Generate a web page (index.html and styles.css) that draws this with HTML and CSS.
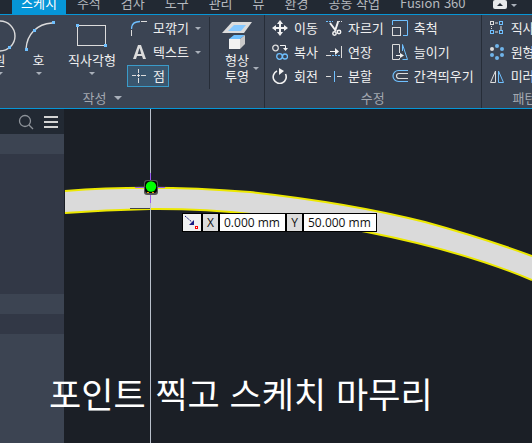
FILE: index.html
```html
<!DOCTYPE html>
<html lang="ko">
<head>
  <meta charset="utf-8">
  <title>스케치</title>
  <link rel="stylesheet" href="styles.css">
</head>
<body>
  <nav class="tabs">
    <a href="#" class="tab active">스케치</a>
    <a href="#" class="tab">주석</a>
    <a href="#" class="tab">검사</a>
    <a href="#" class="tab">도구</a>
    <a href="#" class="tab">관리</a>
    <a href="#" class="tab">뷰</a>
    <a href="#" class="tab">환경</a>
    <a href="#" class="tab">공동 작업</a>
    <a href="#" class="tab">Fusion 360</a>
    <button class="collapse" aria-label="리본 최소화">
      <svg width="24" height="14" viewBox="0 0 24 14">
        <rect x="0" y="0" width="14" height="9" rx="2" fill="#e6e8ea"/>
        <path d="M4 6h6L7 3z" fill="#222933"/>
        <path d="M18 4h6l-3 3z" fill="#a9b0ba"/>
      </svg>
    </button>
  </nav>

  <div class="ribbon">
    <section class="panel create">
      <div class="panel-body">
        <button class="large">
          <svg width="32" height="32" viewBox="0 0 32 32">
            <circle cx="16" cy="16" r="15" fill="none" stroke="#dcdcdc" stroke-width="1.4"/>
            <rect x="24" y="26" width="3" height="3" fill="#6fc0ff"/>
          </svg>
          <span>원</span>
          <i class="caret"></i>
        </button>
        <button class="large">
          <svg width="32" height="32" viewBox="0 0 32 32">
            <path d="M3 29C4 14 14 4 29 3" fill="none" stroke="#dcdcdc" stroke-width="1.4"/>
            <rect x="2" y="28" width="3" height="3" fill="#6fc0ff"/>
            <rect x="10" y="9" width="3" height="3" fill="#6fc0ff"/>
            <rect x="29" y="1" width="3" height="3" fill="#6fc0ff"/>
          </svg>
          <span>호</span>
          <i class="caret"></i>
        </button>
        <button class="large wide">
          <svg width="32" height="32" viewBox="0 0 32 32">
            <rect x="1.500" y="5.500" width="28" height="20" fill="none" stroke="#dcdcdc"/>
            <rect x="0" y="4" width="3" height="3" fill="#6fc0ff"/>
            <rect x="28" y="24" width="3" height="3" fill="#6fc0ff"/>
          </svg>
          <span>직사각형</span>
          <i class="caret"></i>
        </button>
        <div class="column">
          <button class="small">
            <svg width="16" height="16" viewBox="0 0 16 16" fill="none">
              <path d="M.5 9C.5 4 4 1.500 9 1.500" stroke="#6fc0ff" stroke-width="1.300"/>
              <path d="M10 1.500h6M.5 10v6" stroke="#dcdcdc"/>
            </svg>
            <span>모깎기</span>
            <i class="caret"></i>
          </button>
          <button class="small">
            <svg width="16" height="16" viewBox="0 0 16 16">
              <path d="M2 15L7 1h3l5 14h-3l-1-3H6l-1 3zM6.700 10h3.600L8.500 4z" fill="#dcdcdc" fill-rule="evenodd"/>
            </svg>
            <span>텍스트</span>
            <i class="caret"></i>
          </button>
          <button class="small selected">
            <svg width="16" height="16" viewBox="0 0 16 16">
              <path d="M7.500 1v4M7.500 6v3M7.500 10v5M1 7.500h4M6 7.500h3M10 7.500h5" stroke="#dcdcdc"/>
            </svg>
            <span>점</span>
          </button>
        </div>
        <div class="divider"></div>
        <button class="large project">
          <svg width="32" height="32" viewBox="0 0 32 32">
            <path d="M11 2h20l-8 11H1z" fill="#dcdcdc"/>
            <path d="M13 5h12l-5 6H7z" fill="#85c8ff"/>
            <path d="M8 19h11v10H8z" fill="#f2f2f2"/>
            <path d="M8 19l5-4h11l-5 4z" fill="#6fc0ff"/>
            <path d="M19 19l5-4v9l-5 5z" fill="#c9c9c9"/>
          </svg>
          <span class="project-label">
            <span>형상<br>투영</span>
            <i class="caret"></i>
          </span>
        </button>
      </div>
      <button class="panel-title">작성 <i class="caret big"></i></button>
    </section>

    <section class="panel modify">
      <div class="panel-body">
        <div class="column">
          <button class="small">
            <svg width="16" height="16" viewBox="0 0 16 16">
              <path d="M8 0l3 4H9v3h3V5l4 3-4 3V9H9v3h2l-3 4-3-4h2V9H4v2L0 8l4-3v2h3V4H5z" fill="#f2f2f2"/>
            </svg>
            <span>이동</span>
          </button>
          <button class="small">
            <svg width="16" height="16" viewBox="0 0 16 16" fill="none">
              <circle cx="3.500" cy="4" r="2.800" stroke="#dcdcdc" stroke-width="1.300"/>
              <path d="M8 1.500h5.500V4" stroke="#f2f2f2"/>
              <path d="M11 4h5l-2.500 3z" fill="#f2f2f2"/>
              <circle cx="7.500" cy="12.500" r="2.800" stroke="#6fc0ff" stroke-width="1.300"/>
              <circle cx="13" cy="12.500" r="2.500" stroke="#6fc0ff" stroke-width="1.300"/>
            </svg>
            <span>복사</span>
          </button>
          <button class="small">
            <svg width="16" height="16" viewBox="0 0 16 16">
              <path d="M5 3A6.500 6.500 0 1 0 13.500 6" fill="none" stroke="#f2f2f2" stroke-width="1.600"/>
              <path d="M7 0l5 3-5 4z" fill="#f2f2f2"/>
            </svg>
            <span>회전</span>
          </button>
        </div>
        <div class="column">
          <button class="small">
            <svg width="16" height="16" viewBox="0 0 16 16" fill="none">
              <path d="M0 1.500h7" stroke="#6fc0ff" stroke-dasharray="2 1"/>
              <path d="M11 1.500h5" stroke="#dcdcdc" stroke-dasharray="3 1"/>
              <path d="M4 3l6 8M12 2l-3 9" stroke="#f2f2f2" stroke-width="2"/>
              <circle cx="8.500" cy="13.500" r="1.700" stroke="#f2f2f2" stroke-width="1.500"/>
              <circle cx="13" cy="12" r="1.700" stroke="#f2f2f2" stroke-width="1.500"/>
            </svg>
            <span>자르기</span>
          </button>
          <button class="small">
            <svg width="16" height="16" viewBox="0 0 16 16">
              <path d="M4 7.500h6" stroke="#f2f2f2"/>
              <path d="M9 4l4 3.500L9 11z" fill="#f2f2f2"/>
              <path d="M15.500 2v12" stroke="#dcdcdc"/>
              <path d="M0 11.500h5" stroke="#dcdcdc"/>
              <path d="M6 11.500h8" stroke="#6fc0ff" stroke-dasharray="2 1"/>
            </svg>
            <span>연장</span>
          </button>
          <button class="small">
            <svg width="16" height="16" viewBox="0 0 16 16">
              <path d="M0 8.500h5M11 8.500h5" stroke="#dcdcdc"/>
              <path d="M8.500 3v11" stroke="#6fc0ff"/>
            </svg>
            <span>분할</span>
          </button>
        </div>
        <div class="column">
          <button class="small">
            <svg width="16" height="16" viewBox="0 0 16 16" fill="none">
              <path d="M.5 5V.5h15v15H11" stroke="#6fc0ff"/>
              <rect x=".5" y="7.500" width="8" height="8" stroke="#dcdcdc"/>
            </svg>
            <span>축척</span>
          </button>
          <button class="small">
            <svg width="16" height="16" viewBox="0 0 16 16" fill="none">
              <path d="M7.500 9V.5h-7v15h7V14" stroke="#dcdcdc"/>
              <path d="M10.500 7V.5l5 15h-5" stroke="#6fc0ff"/>
              <path d="M4 11.500h4" stroke="#f2f2f2"/>
              <path d="M8 9l4 2.500L8 14z" fill="#f2f2f2"/>
            </svg>
            <span>늘이기</span>
          </button>
          <button class="small">
            <svg width="16" height="16" viewBox="0 0 16 16" fill="none">
              <path d="M16 2.500H6.500a5.500 5.500 0 0 0 0 11H16" stroke="#6fc0ff" stroke-width="1.200"/>
              <path d="M16 5.500H7a2.500 2.500 0 0 0 0 5h9" stroke="#dcdcdc" stroke-width="1.200"/>
            </svg>
            <span>간격띄우기</span>
          </button>
        </div>
      </div>
      <div class="panel-title">수정</div>
    </section>

    <section class="panel pattern">
      <div class="panel-body">
        <div class="column">
          <button class="small">
            <svg width="16" height="16" viewBox="0 0 16 16" fill="none">
              <path d="M2.500 6v4" stroke="#dcdcdc" stroke-dasharray="1 1"/>
              <path d="M6 3h3M6 12h3M12 6v4" stroke="#dcdcdc"/>
              <rect x="1.500" y="1.500" width="3" height="3" stroke="#dcdcdc"/>
              <rect x="10.500" y="1.500" width="3" height="3" stroke="#6fc0ff"/>
              <rect x="1.500" y="10.500" width="3" height="3" stroke="#6fc0ff"/>
              <rect x="10.500" y="10.500" width="3" height="3" stroke="#6fc0ff"/>
            </svg>
            <span>직사각형</span>
          </button>
          <button class="small">
            <svg width="16" height="16" viewBox="0 0 16 16" fill="#6fb4ea">
              <circle cx="8" cy="2" r="2"/>
              <circle cx="13" cy="5" r="2"/>
              <circle cx="13" cy="11" r="2"/>
              <circle cx="8" cy="14" r="2"/>
              <circle cx="3" cy="11" r="2"/>
              <circle cx="3" cy="5" r="2" fill="#dcdcdc"/>
            </svg>
            <span>원형</span>
          </button>
          <button class="small">
            <svg width="16" height="16" viewBox="0 0 16 16" fill="none">
              <path d="M6.500 3v11.500h-5z" stroke="#dcdcdc"/>
              <path d="M9.500 3v11.500h5z" stroke="#6fc0ff"/>
            </svg>
            <span>미러</span>
          </button>
        </div>
      </div>
      <div class="panel-title">패턴</div>
    </section>
  </div>

  <main class="workspace">
    <aside class="browser">
      <div class="browser-bar">
        <button aria-label="검색">
          <svg width="16" height="16" viewBox="0 0 16 16" fill="none" stroke="#8d9299" stroke-width="1.300">
            <circle cx="7" cy="7" r="5.500"/>
            <path d="M11 11l4 4"/>
          </svg>
        </button>
        <button aria-label="메뉴">
          <svg width="14" height="12" viewBox="0 0 14 12" fill="#d4d4d4">
            <path d="M0 0h14v2H0zM0 5h14v2H0zM0 10h14v2H0z"/>
          </svg>
        </button>
      </div>
      <div class="row light"></div>
      <div class="tree"></div>
      <div class="row light"></div>
      <div class="row"></div>
    </aside>

    <div class="canvas">
      <svg class="drawing" width="468" height="334" viewBox="0 0 468 334" fill="none">
        <path d="M1 82Q86 75 186 83Q286 94 361 113Q419 129 468 147V171Q399 142 303 123Q186 99 86 100Q41 101 1 104z" fill="#dadada"/>
        <path d="M1 82Q86 75 186 83Q286 94 361 113Q419 129 468 147" stroke="#ece800" stroke-width="2"/>
        <path d="M468 171Q399 142 303 123Q186 99 86 100Q41 101 1 104" stroke="#ece800" stroke-width="2"/>
        <path d="M66 99.500h20" stroke="#444"/>
        <path d="M86.500 0v334" stroke="#b9c0cb"/>
        <path d="M86.500 64v30M71 78.500h30" stroke="#9a5cf0"/>
        <rect x="80" y="71" width="14" height="15" rx="3" fill="#555"/>
        <rect x="81" y="72" width="12" height="12" rx="3" fill="#000"/>
        <path d="M83 83.500h2M88 83.500h2" stroke="#f0a000"/>
        <circle cx="87" cy="77.500" r="5.200" fill="#00ff00"/>
      </svg>
      <form class="coords">
        <span class="coord-icon">
          <svg width="18" height="17" viewBox="0 0 18 17">
            <path d="M2 2l8 7" stroke="#1a1a80" stroke-dasharray="2 1"/>
            <path d="M11 6v5H6z" fill="#1a1a80"/>
            <rect x="12.500" y="12.500" width="2" height="2" fill="#fff" stroke="#f00"/>
          </svg>
        </span>
        <label for="coord-x">X</label>
        <input type="text" id="coord-x" value="0.000 mm">
        <label for="coord-y">Y</label>
        <input type="text" id="coord-y" class="coord-long" value="50.000 mm">
      </form>
    </div>
    <p class="caption">포인트 찍고 스케치 마무리</p>
  </main>
</body>
</html>
```
FILE: styles.css
```css
* {
  box-sizing: border-box;
}

body {
  display: flex;
  flex-direction: column;
  min-height: 100vh;
  margin: 0;
  overflow: hidden;
  background: #1b1f26;
  color: #f0f0f0;
  font-family: "Noto Sans CJK KR", sans-serif;
  font-size: 13px;
  line-height: 16px;
}

button {
  padding: 0;
  border: 1px solid transparent;
  background: none;
  color: inherit;
  font: inherit;
  white-space: nowrap;
}

svg {
  display: block;
  flex: none;
}

/* Tabs */
.tabs {
  display: flex;
  align-items: flex-end;
  gap: 2px;
  height: 15px;
  padding-left: 12px;
  overflow: hidden;
  border-bottom: 1px solid #0696d7;
  background: #222933;
  white-space: nowrap;
}

.tab {
  flex: none;
  padding: 0 9px 3px;
  color: #b4b8be;
  text-decoration: none;
}

.tab.active {
  background: #0696d7;
  color: #fff;
}

.collapse {
  flex: none;
  margin-left: 16px;
  border: 0;
}

/* Ribbon */
.ribbon {
  display: flex;
  height: 94px;
  overflow: hidden;
  border-bottom: 1px solid #0696d7;
  background: #3b4453;
}

.panel {
  display: flex;
  flex: none;
  flex-direction: column;
  border-right: 1px solid #262d38;
}

.panel-body {
  display: flex;
  height: 74px;
  padding-top: 2px;
}

.create {
  margin-left: -59px;
}

.create .panel-body {
  padding-left: 39px;
}

.modify .panel-body {
  gap: 6px;
  padding: 2px 6px 0 6px;
}

.pattern .panel-body {
  padding: 2px 8px 0 6px;
}

.panel-title {
  display: flex;
  align-items: center;
  justify-content: center;
  gap: 8px;
  height: 18px;
  border: 0;
  color: #a3a8b0;
}

.large {
  display: flex;
  flex-direction: column;
  align-items: center;
  width: 39px;
  padding-top: 2px;
}

.large.wide {
  width: 68px;
}

.large > .caret {
  margin-top: 4px;
}

.column {
  display: flex;
  flex-direction: column;
  gap: 2px;
}

.create .column {
  width: 83px;
  padding-left: 1px;
}

.small {
  display: flex;
  align-items: center;
  align-self: flex-start;
  gap: 6px;
  height: 22px;
  padding: 0 3px;
}

.modify .small,
.pattern .small {
  padding: 0;
}

.small.selected {
  border-color: #3a9bc9;
  background: #3a566e;
}

.caret {
  border: 3px solid transparent;
  border-top-color: #a9b0ba;
  border-bottom: 0;
}

.caret.big {
  border-width: 4px 4px 0;
}

.divider {
  width: 1px;
  background: #262d38;
}

.large.project {
  width: 54px;
}

.project-label {
  display: grid;
  grid-template-columns: 1fr auto 1fr;
  align-items: center;
  width: 100%;
}

.project-label .caret {
  grid-column: 3;
  justify-self: center;
}

.project-label span {
  grid-column: 2;
}

/* Workspace */
.workspace {
  position: relative;
  display: flex;
  flex: 1;
}

.browser {
  display: flex;
  flex: none;
  flex-direction: column;
  width: 64px;
  background: #3c4452;
}

.browser-bar {
  display: flex;
  align-items: center;
  justify-content: flex-end;
  gap: 8px;
  height: 25px;
  padding-right: 5px;
  background: #222933;
}

.row {
  height: 20px;
  background: #323846;
}

.row.light {
  background: #3c4452;
}

.tree {
  height: 140px;
  background: #323846;
}

.canvas {
  position: relative;
  flex: 1;
  overflow: hidden;
}

.drawing {
  position: absolute;
  top: 0;
  left: 0;
}

/* coordinate entry floating beside the cursor */
.coords {
  position: absolute;
  top: 104px;
  left: 118px;
  display: flex;
  gap: 2px;
  margin: 0;
  padding: 1px;
  background: #000;
  color: #111;
  font-family: "Open Sans", sans-serif;
  font-size: 12px;
  line-height: 17px;
}

.coord-icon {
  background: #f0f0f0;
}

.coords label {
  width: 15px;
  background: #dcdcdc;
  text-align: center;
}

.coords input {
  width: 65px;
  height: 17px;
  padding: 0 4px;
  border: 0;
  background: #fff;
  color: #111;
  font: inherit;
}

.coords .coord-long {
  width: 72px;
}

.caption {
  position: absolute;
  bottom: 24px;
  left: 49px;
  margin: 0;
  color: #fff;
  font-size: 35px;
  line-height: 52px;
  white-space: nowrap;
}
```
